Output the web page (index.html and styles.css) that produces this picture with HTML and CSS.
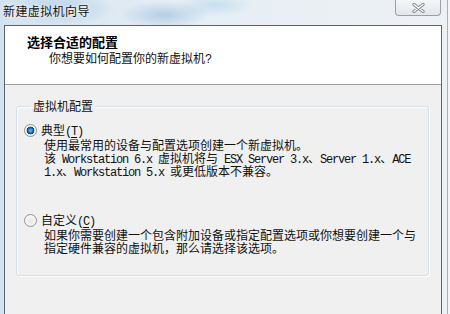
FILE: index.html
```html
<!DOCTYPE html>
<html lang="zh-CN">
<head>
<meta charset="utf-8">
<title>新建虚拟机向导</title>
<link rel="stylesheet" href="styles.css">
</head>
<body>
<div class="frame">
  <div class="titlebar">
    <span class="title">新建虚拟机向导</span>
    <button class="close" type="button" aria-label="关闭">
      <svg width="13" height="10" viewBox="0 0 13 10">
        <path d="M2 1.5 L11 8.5 M11 1.5 L2 8.5" stroke="#7d858d" stroke-width="3.2" stroke-linecap="round" fill="none"/>
        <path d="M2 1.5 L11 8.5 M11 1.5 L2 8.5" stroke="#ffffff" stroke-width="1.4" stroke-linecap="round" fill="none"/>
      </svg>
    </button>
  </div>
  <div class="window">
    <div class="header">
      <div class="h-title">选择合适的配置</div>
      <div class="h-sub">你想要如何配置你的新虚拟机<span class="lat">?</span></div>
    </div>
    <div class="body">
      <fieldset class="group">
        <legend>虚拟机配置</legend>
        <div class="option">
          <div class="opt-row"><span class="radio checked"></span><span class="opt-label">典型<span class="lat">(<u>T</u>)</span></span></div>
          <div class="desc">
            <div class="line">使用最常用的设备与配置选项创建一个新虚拟机。</div>
            <div class="line">该<span class="lat"> Workstation 6.x </span>虚拟机将与<span class="lat"> ESX Server 3.x</span>、<span class="lat">Server 1.x</span>、<span class="lat">ACE</span></div>
            <div class="line"><span class="lat">1.x</span>、<span class="lat">Workstation 5.x </span>或更低版本不兼容。</div>
          </div>
        </div>
        <div class="option option-2">
          <div class="opt-row"><span class="radio"></span><span class="opt-label">自定义<span class="lat">(<u>C</u>)</span></span></div>
          <div class="desc">
            <div class="line">如果你需要创建一个包含附加设备或指定配置选项或你想要创建一个与</div>
            <div class="line">指定硬件兼容的虚拟机，那么请选择该选项。</div>
          </div>
        </div>
      </fieldset>
    </div>
  </div>
</div>
</body>
</html>
```
FILE: styles.css
```css
* { box-sizing: border-box; }

body {
  margin: 0;
  width: 450px;
  height: 314px;
  overflow: hidden;
  background: #f3f4f5;
  font-family: "Noto Sans CJK SC", "Noto Sans", sans-serif;
  color: #111;
}

.frame {
  width: 448px;
  height: 314px;
  border-right: 1px solid #a9b0b7;
  background:
    radial-gradient(ellipse 55px 16px at 60px 9px, rgba(150, 190, 225, 0.55), rgba(150, 190, 225, 0)),
    radial-gradient(ellipse 45px 14px at 165px 15px, rgba(130, 175, 215, 0.5), rgba(130, 175, 215, 0)),
    radial-gradient(ellipse 40px 12px at 215px 5px, rgba(160, 205, 230, 0.45), rgba(160, 205, 230, 0)),
    linear-gradient(90deg, #d2e2ef 0, #e6eef5 40%, #eef1f4 100%);
}

.titlebar {
  height: 25px;
  display: flex;
  align-items: flex-start;
}

.title {
  margin: 2px 0 0 3px;
  font-size: 12px;
  line-height: 17px;
  letter-spacing: 0.4px;
  color: #111;
  text-shadow: 0 0 6px #fff, 0 0 3px #fff;
}

.close {
  margin: 0 6px 0 auto;
  width: 46px;
  height: 16px;
  padding: 0;
  border: 1px solid #97a1aa;
  border-top: none;
  border-radius: 0 0 4px 4px;
  background: linear-gradient(#f5f7f9, #e2e7ec);
  display: flex;
  align-items: center;
  justify-content: center;
}

.close svg { display: block; }

.window {
  margin-left: 4px;
  width: 438px;
  height: 289px;
  border: 1px solid #5f6367;
  border-bottom: none;
  background: #f0f0f0;
  display: flex;
  flex-direction: column;
}

.header {
  height: 59px;
  flex: none;
  background: #fff;
  border-bottom: 1px solid #a0a0a0;
  padding: 8px 0 0 22px;
}

.h-title {
  font-size: 13px;
  font-weight: bold;
  line-height: 16px;
  color: #000;
}

.h-sub {
  font-size: 12px;
  line-height: 15px;
  padding-left: 22px;
  color: #111;
}

.lat {
  font-family: "Liberation Mono", "DejaVu Sans Mono", monospace;
  font-size: 12px;
  letter-spacing: -1.2px;
}

.body {
  flex: 1;
  padding: 14px 12px 0 11px;
}

.group {
  margin: 0;
  padding: 10px 0 21px 6px;
  border: 1px solid #d5dfe5;
  border-radius: 3px;
  box-shadow: inset 1px 1px 0 #fff, 1px 1px 0 #fff;
  min-width: 0;
}

.group legend {
  margin-left: 8px;
  padding: 0 2px;
  font-size: 12px;
  line-height: 14px;
  color: #111;
}

.opt-row {
  height: 15px;
  display: flex;
  align-items: center;
  font-size: 12px;
  line-height: 15px;
}

.radio {
  width: 13px;
  height: 13px;
  margin-left: 1px;
  border-radius: 50%;
  border: 1px solid #8f9396;
  background: radial-gradient(circle at 50% 55%, #e4e4e4 0, #f4f4f4 55%, #fbfbfb 100%);
  flex: none;
}

.radio.checked {
  background:
    radial-gradient(circle at 50% 50%, #6fc6f2 0, #2a7cc6 2px, #14406e 3.6px, rgba(20, 64, 110, 0) 4.2px),
    radial-gradient(circle at 50% 55%, #e4e4e4 0, #f4f4f4 55%, #fbfbfb 100%);
}

.opt-label {
  margin-left: 4px;
  white-space: nowrap;
}

.opt-label u { text-underline-offset: 2px; }

.desc {
  padding-left: 21px;
}

.line {
  height: 13px;
  font-size: 12px;
  line-height: 13px;
  white-space: nowrap;
}

.option-2 {
  margin-top: 36px;
}
```
